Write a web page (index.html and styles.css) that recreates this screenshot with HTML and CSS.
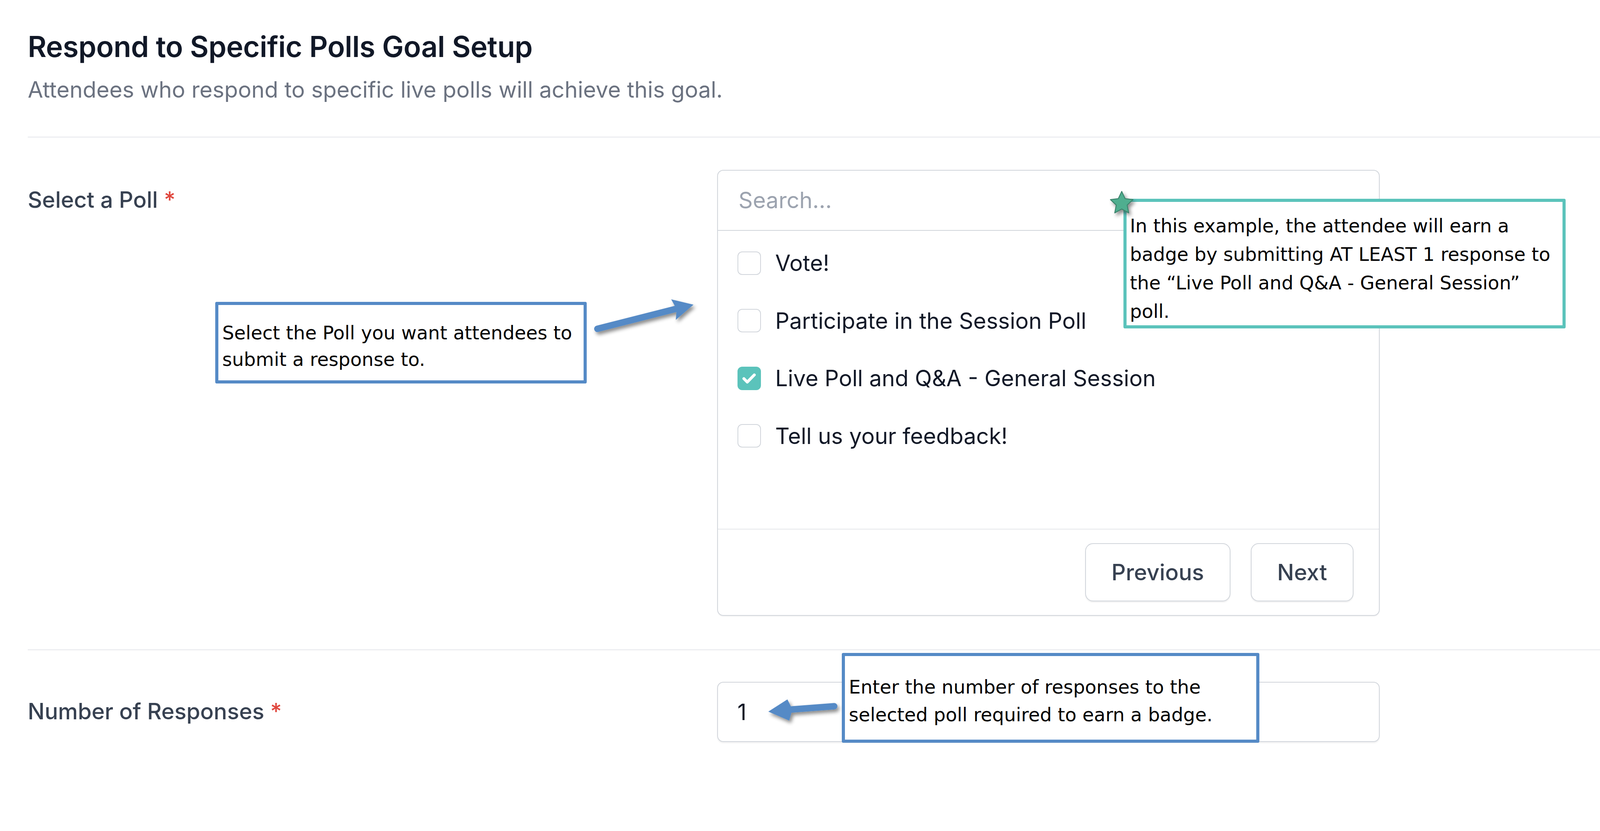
FILE: index.html
```html
<!DOCTYPE html>
<html lang="en">
<head>
<meta charset="utf-8">
<title>Respond to Specific Polls Goal Setup</title>
<link rel="stylesheet" href="styles.css">
</head>
<body>
<div class="page">
  <header class="head">
    <h1 class="title">Respond to Specific Polls Goal Setup</h1>
    <p class="subtitle">Attendees who respond to specific live polls will achieve this goal.</p>
  </header>

  <section class="row row-poll">
    <div class="label label-poll">Select a Poll <span class="req">*</span></div>
    <div class="picker">
      <div class="search">Search...</div>
      <ul class="options">
        <li class="option"><span class="check"></span><span>Vote!</span></li>
        <li class="option"><span class="check"></span><span>Participate in the Session Poll</span></li>
        <li class="option"><span class="check checked"><svg viewBox="0 0 16 16" class="tick"><path d="M4 8.3l2.6 2.6L12 5.4" fill="none" stroke="#fff" stroke-width="2.2" stroke-linecap="round" stroke-linejoin="round"/></svg></span><span>Live Poll and Q&amp;A - General Session</span></li>
        <li class="option"><span class="check"></span><span>Tell us your feedback!</span></li>
      </ul>
      <div class="pager">
        <button class="btn">Previous</button>
        <button class="btn">Next</button>
      </div>
    </div>
  </section>

  <section class="row row-num">
    <div class="label label-num">Number of Responses <span class="req">*</span></div>
    <div class="num-input">1</div>
  </section>

  <div class="note note-select">Select the Poll you want attendees to<br>submit a response to.</div>
  <div class="note note-example">In this example, the attendee will earn a<br>badge by submitting AT LEAST 1 response to<br>the “Live Poll and Q&amp;A - General Session”<br>poll.</div>
  <div class="note note-number">Enter the number of responses to the<br>selected poll required to earn a badge.</div>

  <svg class="overlay" viewBox="0 0 4446 2128">
    <defs>
      <filter id="shadow" x="-30%" y="-30%" width="160%" height="160%">
        <feDropShadow dx="5" dy="7" stdDeviation="5" flood-color="#000" flood-opacity="0.45"/>
      </filter>
    </defs>
    <g filter="url(#shadow)" fill="#558ac6" stroke="none">
      <line x1="1660" y1="914" x2="1880" y2="858" stroke="#558ac6" stroke-width="18" stroke-linecap="round"/>
      <polygon points="1927,847 1865,832 1880,859 1878,889"/>
      <line x1="2318" y1="1963" x2="2200" y2="1972" stroke="#558ac6" stroke-width="18" stroke-linecap="round"/>
      <polygon points="2135,1978 2188,1944 2202,1972 2193,2003"/>
    </g>
    <g transform="translate(3117 565)" filter="url(#shadow)">
      <path d="M0,-33 L9.4,-12.94 L31.38,-10.2 L15.22,4.94 L19.4,26.7 L0,16 L-19.4,26.7 L-15.22,4.94 L-31.38,-10.2 L-9.4,-12.94 Z" fill="#4fae8f" stroke="#3b826b" stroke-width="2.5" stroke-linejoin="round"/>
    </g>
  </svg>
</div>
</body>
</html>
```

FILE: styles.css
```css
/* 1rem = 10 reference pixels, scaled to the viewport width */
html {
  font-size: calc(100vw / 444.6);
}

html, body {
  margin: 0;
  padding: 0;
  background: #ffffff;
  overflow: hidden;
}

body {
  font-family: "Inter", "Noto Sans", sans-serif;
  color: #111827;
}

.page {
  position: relative;
  width: 444.6rem;
  height: 212.8rem;
  overflow: hidden;
  padding-left: 7.7rem;
  box-sizing: border-box;
}

.head {
  padding-top: 7.5rem;
  padding-bottom: 9rem;
}

.title {
  margin: 0;
  font-size: 8rem;
  line-height: 11rem;
  font-weight: 600;
  color: #111827;
  letter-spacing: -0.05rem;
}

.subtitle {
  margin: 2.5rem 0 0;
  font-size: 6.2rem;
  line-height: 8rem;
  color: #6b7280;
}

.row {
  display: grid;
  grid-template-columns: 191.6rem 184.1rem;
  align-items: start;
  border-top: 0.3rem solid #e5e7eb;
}

.row-poll {
  padding-top: 9rem;
  padding-bottom: 9.3rem;
}

.row-num {
  padding-top: 8.8rem;
}

.label {
  font-size: 6.2rem;
  line-height: 8rem;
  font-weight: 500;
  color: #374151;
}

.label-poll {
  margin-top: 4.3rem;
}

.label-num {
  margin-top: 4.2rem;
}

.req {
  color: #e0463d;
}

.picker {
  border: 0.3rem solid #d1d5db;
  border-radius: 1.7rem;
  height: 124rem;
  box-sizing: border-box;
  display: flex;
  flex-direction: column;
  box-shadow: 0 0.2rem 0.3rem rgba(0, 0, 0, 0.05);
}

.search {
  height: 16.5rem;
  flex: none;
  border-bottom: 0.3rem solid #d1d5db;
  padding-left: 5.7rem;
  display: flex;
  align-items: center;
  font-size: 6.2rem;
  color: #9ca3af;
}

.options {
  list-style: none;
  margin: 0;
  padding: 1rem 0 0 5.4rem;
  height: 82.8rem;
  box-sizing: border-box;
  flex: none;
}

.option {
  height: 16rem;
  display: flex;
  align-items: center;
  gap: 4rem;
  font-size: 6.2rem;
  color: #111827;
}

.check {
  width: 6.5rem;
  height: 6.5rem;
  box-sizing: border-box;
  border: 0.3rem solid #d1d5db;
  border-radius: 1.3rem;
  flex: none;
  display: flex;
  align-items: center;
  justify-content: center;
  background: #fff;
}

.check.checked {
  background: #5bc3bb;
  border-color: #5bc3bb;
}

.tick {
  width: 5.8rem;
  height: 5.8rem;
}

.pager {
  flex: 1;
  border-top: 0.3rem solid #e5e7eb;
  display: flex;
  justify-content: flex-end;
  align-items: center;
  gap: 5.7rem;
  padding-right: 7.1rem;
}

.btn {
  height: 16.2rem;
  padding: 0 7.1rem;
  border: 0.3rem solid #d1d5db;
  border-radius: 2.2rem;
  background: #fff;
  font-family: "Inter", "Noto Sans", sans-serif;
  font-size: 6.2rem;
  font-weight: 500;
  color: #374151;
  box-shadow: 0 0.3rem 0.3rem rgba(0, 0, 0, 0.06);
}

.num-input {
  height: 16.7rem;
  box-sizing: border-box;
  border: 0.3rem solid #d1d5db;
  border-radius: 1.7rem;
  padding-left: 5.4rem;
  display: flex;
  align-items: center;
  font-size: 6.2rem;
  color: #111827;
  box-shadow: 0 0.3rem 0.4rem rgba(0, 0, 0, 0.06);
}

.note {
  position: absolute;
  box-sizing: border-box;
  background: #fff;
  font-family: "DejaVu Sans", "Verdana", sans-serif;
  font-size: 5.2rem;
  color: #000;
  white-space: nowrap;
  border-radius: 0.4rem;
}

.note-select {
  left: 59.8rem;
  top: 83.9rem;
  width: 103.2rem;
  height: 22.7rem;
  border: 0.9rem solid #558ac6;
  padding: 4.1rem 0 0 1.1rem;
  line-height: 7.4rem;
}

.note-example {
  left: 312.2rem;
  top: 55.3rem;
  width: 122.8rem;
  height: 36rem;
  border: 0.9rem solid #5bc3bb;
  padding: 2.8rem 0 0 0.9rem;
  line-height: 7.9rem;
}

.note-number {
  left: 233.9rem;
  top: 181.5rem;
  width: 116rem;
  height: 24.9rem;
  border: 0.9rem solid #558ac6;
  padding: 4.9rem 0 0 1.1rem;
  line-height: 7.7rem;
}

.overlay {
  position: absolute;
  left: 0;
  top: 0;
  width: 444.6rem;
  height: 212.8rem;
  pointer-events: none;
}
```
